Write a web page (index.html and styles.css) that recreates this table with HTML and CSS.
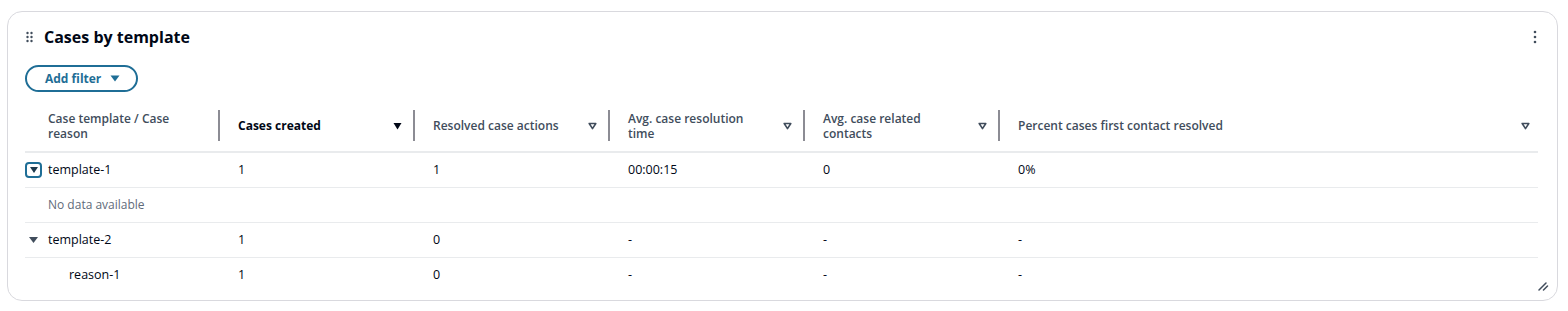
FILE: index.html
```html
<!DOCTYPE html>
<html lang="en">
<head>
<meta charset="utf-8">
<title>Cases by template</title>
<link rel="stylesheet" href="styles.css">
</head>
<body>
<section class="card">
  <header class="card-head">
    <svg class="handle" width="7" height="12" viewBox="0 0 7 12" aria-hidden="true">
      <circle cx="1.5" cy="2" r="1.2"/><circle cx="5.5" cy="2" r="1.2"/>
      <circle cx="1.5" cy="6" r="1.2"/><circle cx="5.5" cy="6" r="1.2"/>
      <circle cx="1.5" cy="10" r="1.2"/><circle cx="5.5" cy="10" r="1.2"/>
    </svg>
    <h2 class="title">Cases by template</h2>
    <button class="kebab" aria-label="More actions">
      <svg width="4" height="14" viewBox="0 0 4 14"><circle cx="2" cy="2" r="1.3"/><circle cx="2" cy="7" r="1.3"/><circle cx="2" cy="12" r="1.3"/></svg>
    </button>
  </header>

  <button class="filter-btn">Add filter
    <svg width="10" height="7" viewBox="0 0 10 7"><path d="M0.5 0.5h9L5 6.5z"/></svg>
  </button>

  <table class="grid">
    <colgroup>
      <col class="c1"><col class="c2"><col class="c3"><col class="c4"><col class="c5"><col class="c6">
    </colgroup>
    <thead>
      <tr>
        <th class="first"><div class="th-in"><span class="label">Case template / Case reason</span></div></th>
        <th class="sorted"><div class="th-in"><span class="label">Cases created</span>
          <svg class="sort" width="9" height="8" viewBox="0 0 9 8"><path d="M0.5 1h8L4.5 7.5z"/></svg></div></th>
        <th><div class="th-in"><span class="label">Resolved case actions</span>
          <svg class="sort open" width="9" height="8" viewBox="0 0 9 8"><path d="M1.2 1.5h6.6L4.5 6.6z"/></svg></div></th>
        <th><div class="th-in"><span class="label">Avg. case resolution time</span>
          <svg class="sort open" width="9" height="8" viewBox="0 0 9 8"><path d="M1.2 1.5h6.6L4.5 6.6z"/></svg></div></th>
        <th><div class="th-in"><span class="label">Avg. case related contacts</span>
          <svg class="sort open" width="9" height="8" viewBox="0 0 9 8"><path d="M1.2 1.5h6.6L4.5 6.6z"/></svg></div></th>
        <th class="last"><div class="th-in"><span class="label wide">Percent cases first contact resolved</span>
          <svg class="sort open" width="9" height="8" viewBox="0 0 9 8"><path d="M1.2 1.5h6.6L4.5 6.6z"/></svg></div></th>
      </tr>
    </thead>
    <tbody>
      <tr>
        <td class="first"><div class="tree">
          <span class="toggle focused"><svg width="8" height="6" viewBox="0 0 8 6"><path d="M0 0h8L4 6z"/></svg></span>template-1</div></td>
        <td>1</td><td>1</td><td>00:00:15</td><td>0</td><td>0%</td>
      </tr>
      <tr>
        <td class="first empty" colspan="6">No data available</td>
      </tr>
      <tr>
        <td class="first"><div class="tree">
          <span class="toggle"><svg width="9" height="6" viewBox="0 0 9 6"><path d="M0 0h9L4.5 6z"/></svg></span>template-2</div></td>
        <td>1</td><td>0</td><td>-</td><td>-</td><td>-</td>
      </tr>
      <tr>
        <td class="first child">reason-1</td>
        <td>1</td><td>0</td><td>-</td><td>-</td><td>-</td>
      </tr>
    </tbody>
  </table>

  <svg class="resize" width="11" height="10" viewBox="0 0 11 10" aria-hidden="true">
    <path d="M1 9L8 2M5.5 9L9.5 5"/>
  </svg>
</section>
</body>
</html>
```
FILE: styles.css
```css
* { box-sizing: border-box; }

body {
  margin: 0;
  background: #ffffff;
  font-family: "Open Sans", "Noto Sans", Arial, sans-serif;
  color: #000716;
}

.card {
  position: relative;
  margin: 11px 0 0 7px;
  width: 1551px;
  height: 290px;
  border: 1px solid #d9d9de;
  border-radius: 15px;
  padding: 14px 18px 0 17px;
  background: #fff;
}

.card-head {
  display: flex;
  align-items: center;
  height: 22px;
}

.handle {
  fill: #414d5c;
  margin: 0 11px 0 1px;
  flex: none;
}

.title {
  margin: 0;
  font-size: 16px;
  line-height: 22px;
  font-weight: 700;
  color: #000716;
  flex: 1;
}

.kebab {
  border: 0;
  background: none;
  padding: 0;
  width: 10px;
  height: 16px;
  display: flex;
  align-items: center;
  justify-content: center;
  margin-right: -1px;
}
.kebab svg { fill: #414d5c; }

.filter-btn {
  margin-top: 17px;
  display: inline-flex;
  align-items: center;
  gap: 9px;
  height: 27px;
  width: 113px;
  padding: 0 0 0 18px;
  border: 2px solid #1f6e96;
  border-radius: 16px;
  background: #fff;
  color: #1f6e96;
  font-family: inherit;
  font-size: 12px;
  font-weight: 700;
}
.filter-btn svg { fill: #1f6e96; }

.grid {
  margin-top: 8px;
  width: 1513px;
  border-collapse: collapse;
  table-layout: fixed;
  font-size: 12px;
}

.c1, .c2, .c3, .c4, .c5 { width: 195px; }

.grid th {
  padding: 10px 0 10px 18px;
  text-align: left;
  vertical-align: middle;
  font-weight: 600;
  color: #414d5c;
  line-height: 15px;
  border-bottom: 2px solid #e9ebed;
}
.grid th.first { padding-left: 23px; }
.grid th.sorted { font-weight: 700; color: #000716; }

.th-in {
  display: flex;
  align-items: center;
  min-height: 31px;
  padding-right: 11px;
  border-right: 2px solid #8c8c94;
}
.last .th-in { border-right: 0; padding-right: 8px; }

.label { flex: 1; max-width: 136px; margin-right: auto; }
.label.wide { max-width: none; }

.sort { flex: none; }
.sort path { fill: #414d5c; }
.sorted .sort path { fill: #000716; }
.sort.open path { fill: none; stroke: #414d5c; stroke-width: 1.6; stroke-linejoin: round; }

.grid td {
  height: 35px;
  padding: 0 0 0 18px;
  vertical-align: middle;
  font-size: 12.5px;
  line-height: 16px;
  color: #000716;
  border-bottom: 1px solid #e9ebed;
}
.grid tbody tr:last-child td { border-bottom: 0; }
.grid td.first { padding-left: 0; }
.grid td.empty { padding-left: 23px; color: #5f6b7a; font-size: 12px; }
.grid td.child { padding-left: 44px; }

.tree { display: flex; align-items: center; gap: 6px; }

.toggle {
  width: 17px;
  height: 16px;
  display: inline-flex;
  align-items: center;
  justify-content: center;
  border: 2px solid transparent;
  border-radius: 4px;
}
.toggle.focused { border-color: #1f6e96; }
.toggle svg { fill: #414d5c; }
.toggle.focused svg { fill: #1f3a4d; }

.resize {
  position: absolute;
  right: 8px;
  bottom: 9px;
  fill: none;
  stroke: #414d5c;
  stroke-width: 1.5;
  stroke-linecap: round;
}
```
